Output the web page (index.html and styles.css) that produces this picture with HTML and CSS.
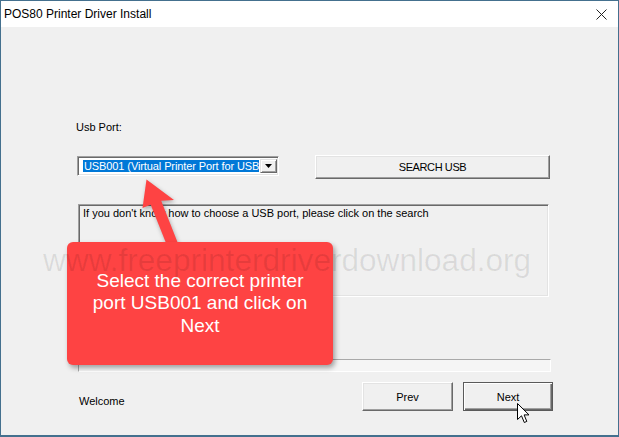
FILE: index.html
```html
<!DOCTYPE html>
<html lang="en">
<head>
    <meta charset="UTF-8">
    <meta name="viewport" content="width=device-width, initial-scale=1.0">
    <title>POS80 Printer Driver Install</title>
    <link rel="stylesheet" href="styles.css">
</head>
<body>
    <div class="window">
        <div class="titlebar">
            <span class="title">POS80 Printer Driver Install</span>
            <svg class="close" width="11" height="11" viewBox="0 0 11 11">
                <path d="M0.5 0.5 L10.5 10.5 M10.5 0.5 L0.5 10.5" stroke="#222" stroke-width="1" fill="none"/>
            </svg>
        </div>
        <div class="client">
            <div class="content">
                <div class="field-label">Usb Port:</div>
                <div class="port-row">
                    <div class="combo">
                        <span class="combo-sel">USB001 (Virtual Printer Port for USB</span>
                        <span class="combo-btn">
                            <svg width="7" height="4" viewBox="0 0 7 4"><path d="M0 0 H7 L3.5 4 Z" fill="#000"/></svg>
                        </span>
                    </div>
                    <button class="btn btn-search">SEARCH USB</button>
                </div>
                <div class="info-box">If you don't know how to choose a USB port, please click on the search</div>
                <div class="progress"></div>
                <div class="footer">
                    <span class="status">Welcome</span>
                    <div class="buttons">
                        <button class="btn btn-prev">Prev</button>
                        <button class="btn btn-next">Next</button>
                    </div>
                </div>
            </div>
        </div>

        <!-- tutorial overlay -->
        <svg class="arrow" width="50" height="80" viewBox="0 0 50 80">
            <polygon points="11.5,4.5 39,25 26.2,25.7 44,71 33.8,75 15.7,29.7 7.5,33" fill="#fe4343"/>
        </svg>
        <div class="callout">Select the correct printer port USB001 and click on Next</div>
        <div class="watermark">www.freeprinterdriverdownload.org</div>
        <svg class="cursor" width="14" height="21" viewBox="0 0 14 21">
            <path d="M0.5 0.5 V16.5 L4.5 12.8 L7.3 19.5 L9.8 18.4 L7.1 11.9 H12 Z" fill="#fff" stroke="#000" stroke-width="1" stroke-linejoin="miter"/>
        </svg>
    </div>
</body>
</html>
```

FILE: styles.css
```css
body {
    margin: 0;
    padding: 0;
    background-color: #f0f0f0;
    font-family: "Liberation Sans", Arial, sans-serif;
    font-size: 11px;
    color: #000;
}
.window {
    position: relative;
    width: 619px;
    height: 437px;
    box-sizing: border-box;
    border: 1px solid #44708e;
    border-bottom-width: 2px;
    display: flex;
    flex-direction: column;
    overflow: hidden;
}
.titlebar {
    height: 26px;
    background: #ffffff;
    display: flex;
    align-items: center;
    justify-content: space-between;
    padding-left: 3px;
    padding-bottom: 1px;
    box-sizing: border-box;
}
.title {
    font-size: 12px;
    line-height: 14px;
}
.close {
    margin-right: 11px;
    margin-top: 1px;
}
.client {
    flex: 1;
    background: #f0f0f0;
    padding: 93px 0 0 76px;
}
.content {
    width: 476px;
}
.field-label {
    line-height: 14px;
    margin-left: -1px;
}
.port-row {
    display: flex;
    align-items: flex-start;
    margin-top: 21px;
}
.combo {
    width: 202px;
    height: 20px;
    margin-top: 1px;
    box-sizing: border-box;
    border: 1px solid;
    border-color: #a0a0a0 #ffffff #ffffff #a0a0a0;
    box-shadow: inset 1px 1px #696969, inset -1px -1px #e3e3e3;
    background: #ffffff;
    display: flex;
    align-items: center;
    padding: 2px 1px 2px 5px;
}
.combo-sel {
    flex: 1;
    height: 12px;
    line-height: 12px;
    margin-right: 1px;
    background: #0078d7;
    color: #ffffff;
    white-space: nowrap;
    letter-spacing: -0.1px;
    padding-left: 1px;
}
.combo-btn {
    width: 17px;
    height: 14px;
    box-sizing: border-box;
    background: #f0f0f0;
    border: 1px solid;
    border-color: #e3e3e3 #696969 #696969 #e3e3e3;
    box-shadow: inset 1px 1px #ffffff, inset -1px -1px #a0a0a0;
    display: flex;
    align-items: center;
    justify-content: center;
}
.btn {
    font-family: "Liberation Sans", Arial, sans-serif;
    font-size: 11px;
    color: #000;
    background: #f0f0f0;
    border: 1px solid;
    border-color: #ffffff #696969 #696969 #ffffff;
    box-shadow: inset -1px -1px #a0a0a0, inset 1px 1px #e3e3e3;
    padding: 0;
    box-sizing: border-box;
}
.btn-search {
    width: 235px;
    height: 24px;
    margin-left: 36px;
    letter-spacing: -0.4px;
}
.info-box {
    width: 471px;
    height: 93px;
    margin: 25px 0 0 1px;
    box-sizing: border-box;
    border: 1px solid;
    border-color: #a0a0a0 #ffffff #ffffff #a0a0a0;
    box-shadow: inset 1px 1px #696969, inset -1px -1px #e3e3e3;
    padding: 2px 4px;
    line-height: 13px;
}
.progress {
    width: 473px;
    height: 13px;
    margin: 62px 0 0 1px;
    box-sizing: border-box;
    border: 1px solid;
    border-color: #a9a9a9 #ffffff #ffffff #a9a9a9;
    background: #f5f5f5;
}
.footer {
    display: flex;
    justify-content: space-between;
    align-items: flex-start;
    margin-top: 10px;
}
.status {
    line-height: 14px;
    margin: 12px 0 0 2px;
}
.buttons {
    display: flex;
    gap: 10px;
}
.btn-prev {
    width: 91px;
    height: 29px;
}
.btn-next {
    width: 90px;
    height: 29px;
    border: 1px solid #5a5a5a;
    box-shadow: inset 1px 1px #ffffff, inset -1px -1px #696969, inset -2px -2px #a0a0a0;
}
.arrow {
    position: absolute;
    left: 134px;
    top: 174px;
    filter: drop-shadow(1px 2px 2px rgba(0, 0, 0, 0.3));
}
.callout {
    position: absolute;
    left: 66px;
    top: 241px;
    width: 266px;
    height: 123px;
    box-sizing: border-box;
    padding: 0 16px;
    background: #fe4343;
    border-radius: 6px;
    box-shadow: 2px 3px 5px rgba(0, 0, 0, 0.35);
    color: #ffffff;
    font-size: 19px;
    line-height: 22.5px;
    text-align: center;
    display: flex;
    align-items: center;
    justify-content: center;
}
.watermark {
    position: absolute;
    left: 42px;
    top: 241px;
    font-size: 31.6px;
    line-height: 36px;
    color: rgba(0, 0, 0, 0.09);
    white-space: nowrap;
    pointer-events: none;
}
.cursor {
    position: absolute;
    left: 516px;
    top: 402px;
}
```
